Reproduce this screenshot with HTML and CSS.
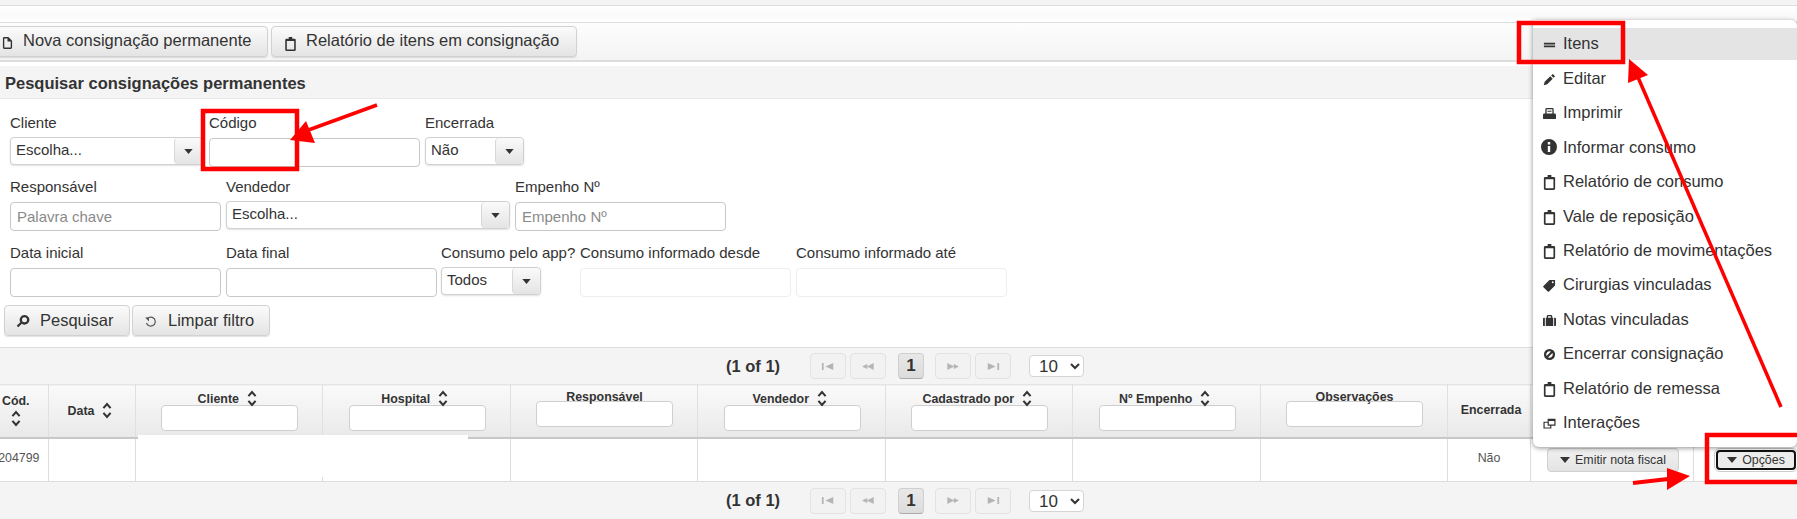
FILE: index.html
```html
<!DOCTYPE html>
<html lang="pt">
<head>
<meta charset="utf-8">
<title>Consignações permanentes</title>
<link rel="stylesheet" href="styles.css">
</head>
<body>
<svg class="sprites" width="0" height="0" aria-hidden="true">
  <symbol id="i-caret" viewBox="0 0 10 6"><path d="M0 0h10L5 6z" fill="currentColor"/></symbol>
  <symbol id="i-sort" viewBox="0 0 10 18"><path d="M1.200 6.500 5 2.200l3.800 4.300M1.200 11.500 5 15.800l3.800-4.300" fill="none" stroke="currentColor" stroke-width="2.200"/></symbol>
  <symbol id="i-clip" viewBox="0 0 12 16"><path fill-rule="evenodd" fill="currentColor" d="M4 0h4v2h2.500A1.500 1.500 0 0 1 12 3.500V14.500A1.500 1.500 0 0 1 10.500 16h-9A1.500 1.500 0 0 1 0 14.500V3.500A1.500 1.500 0 0 1 1.500 2H4zM1.800 4.500v9.700h8.400V4.500z"/></symbol>
  <symbol id="i-file" viewBox="0 0 12 14"><path fill-rule="evenodd" fill="currentColor" d="M2 1h5l4 4v7.500a1.500 1.500 0 0 1-1.500 1.500h-7A1.500 1.500 0 0 1 1 12.500V2.500A1.500 1.500 0 0 1 2 1zM2.500 2.500v10h7V6H6V2.500z"/></symbol>
  <symbol id="i-search" viewBox="0 0 14 14"><path fill-rule="evenodd" fill="currentColor" d="M8.500 1a4.800 4.800 0 1 1-2.700 8.700L2.300 13.300.7 11.700l3.600-3.500A4.800 4.800 0 0 1 8.500 1zm0 2.300a2.500 2.500 0 1 0 0 5 2.500 2.500 0 0 0 0-5z"/></symbol>
  <symbol id="i-refresh" viewBox="0 0 14 14"><path d="M3.500 3.500A4.500 4.500 0 1 1 2.500 8" fill="none" stroke="currentColor" stroke-width="1.200"/><path d="M1 2.500h4v4z" fill="currentColor"/></symbol>
  <symbol id="i-lines" viewBox="0 0 14 14"><path d="M1 5h12v2H1zM1 8h12v2H1z" fill="currentColor"/></symbol>
  <symbol id="i-pencil" viewBox="0 0 14 14"><path d="M.8 13.200l1-3.700 6-6 2.700 2.700-6 6zM8.800 2.700 10.500 1l2.500 2.500-1.700 1.700z" fill="currentColor"/></symbol>
  <symbol id="i-print" viewBox="0 0 14 14"><path fill-rule="evenodd" fill="currentColor" d="M4 1h6a1.500 1.500 0 0 1 1.500 1.500V7h1A1.500 1.500 0 0 1 14 8.500V12a1 1 0 0 1-1 1H1a1 1 0 0 1-1-1V8.500A1.500 1.500 0 0 1 1.500 7h1V2.500A1.500 1.500 0 0 1 4 1zM3.900 2.500V7h6.200V2.500zM4.800 4h4.400v1H4.800z"/></symbol>
  <symbol id="i-info" viewBox="0 0 16 16"><path fill-rule="evenodd" fill="currentColor" d="M8 0a8 8 0 1 1 0 16A8 8 0 0 1 8 0zM6.800 3v2.400h2.400V3zM6.800 7v6h2.400V7z"/></symbol>
  <symbol id="i-tag" viewBox="0 0 14 14"><path fill-rule="evenodd" fill="currentColor" d="M7 1h6v6l-6.500 6.500a1 1 0 0 1-1.400 0L.5 8.900a1 1 0 0 1 0-1.400zm3.500 1.500a1 1 0 1 0 0 2 1 1 0 0 0 0-2z"/></symbol>
  <symbol id="i-case" viewBox="0 0 14 14"><path fill-rule="evenodd" fill="currentColor" d="M4 4V2.500A1.500 1.500 0 0 1 5.500 1h3A1.500 1.500 0 0 1 10 2.500V4h1v9H3V4zm1.500 0h3V2.500h-3zM0 5a1 1 0 0 1 1-1h1v9H1a1 1 0 0 1-1-1zM12 4h1a1 1 0 0 1 1 1v7a1 1 0 0 1-1 1h-1z"/></symbol>
  <symbol id="i-ban" viewBox="0 0 14 14"><path fill-rule="evenodd" fill="currentColor" d="M7 1a6 6 0 1 1 0 12A6 6 0 0 1 7 1zM3.800 8.600l4.800-4.800A3.600 3.600 0 0 0 3.800 8.600zM5.400 10.200a3.600 3.600 0 0 0 4.800-4.800z"/></symbol>
  <symbol id="i-win" viewBox="0 0 14 14"><path fill-rule="evenodd" fill="currentColor" d="M5 2h8.500v7.500H9V12.500H.5V5H5zM6.300 4.300v3.900h5.900V4.300zM1.800 6.300v4.900H7.700V9.500H5V6.300z"/></symbol>
  <symbol id="p-first" viewBox="0 0 16 10"><path d="M1 1h2v8H1zM14 1v8L5 5z" fill="currentColor"/></symbol>
  <symbol id="p-prev" viewBox="0 0 18 10"><path d="M8 2 2 5l6 3M16 1v8L8 5z" fill="currentColor" stroke="currentColor" stroke-width=".6"/></symbol>
  <symbol id="p-next" viewBox="0 0 18 10"><path d="M2 1v8l8-4zM10 2l6 3-6 3" fill="currentColor" stroke="currentColor" stroke-width=".6"/></symbol>
  <symbol id="p-last" viewBox="0 0 16 10"><path d="M2 1v8l9-4zM13 1h2v8h-2z" fill="currentColor"/></symbol>
</svg>

<div class="page">
  <div class="top-strip"></div>
  <div class="top-gap"></div>

  <div class="toolbar">
    <button class="btn btn-tool btn-first"><svg class="ico ico-file"><use href="#i-file"/></svg>Nova consignação permanente</button>
    <button class="btn btn-tool"><svg class="ico ico-clip"><use href="#i-clip"/></svg>Relatório de itens em consignação</button>
  </div>

  <section class="search">
    <h2 class="search-title">Pesquisar consignações permanentes</h2>
    <div class="form">
      <div class="row row-1">
        <label class="field w-cliente"><span class="lbl">Cliente</span>
          <span class="select"><span class="select-val">Escolha...</span><span class="select-btn"><svg class="caret"><use href="#i-caret"/></svg></span></span></label>
        <label class="field w-std"><span class="lbl">Código</span><input class="input" type="text"></label>
        <label class="field w-enc"><span class="lbl">Encerrada</span>
          <span class="select"><span class="select-val">Não</span><span class="select-btn"><svg class="caret"><use href="#i-caret"/></svg></span></span></label>
      </div>
      <div class="row row-2">
        <label class="field w-std"><span class="lbl">Responsável</span><input class="input" type="text" placeholder="Palavra chave"></label>
        <label class="field w-vend"><span class="lbl">Vendedor</span>
          <span class="select"><span class="select-val">Escolha...</span><span class="select-btn"><svg class="caret"><use href="#i-caret"/></svg></span></span></label>
        <label class="field w-std"><span class="lbl">Empenho Nº</span><input class="input" type="text" placeholder="Empenho Nº"></label>
      </div>
      <div class="row row-3">
        <label class="field w-std"><span class="lbl">Data inicial</span><input class="input" type="text"></label>
        <label class="field w-std"><span class="lbl">Data final</span><input class="input" type="text"></label>
        <label class="field w-app"><span class="lbl">Consumo pelo app?</span>
          <span class="select"><span class="select-val">Todos</span><span class="select-btn"><svg class="caret"><use href="#i-caret"/></svg></span></span></label>
        <label class="field w-std"><span class="lbl">Consumo informado desde</span><input class="input input-off" type="text" disabled></label>
        <label class="field w-std"><span class="lbl">Consumo informado até</span><input class="input input-off" type="text" disabled></label>
      </div>
      <div class="actions">
        <button class="btn btn-form"><svg class="ico ico-search"><use href="#i-search"/></svg>Pesquisar</button>
        <button class="btn btn-form"><svg class="ico ico-refresh"><use href="#i-refresh"/></svg>Limpar filtro</button>
      </div>
    </div>
  </section>

  <div class="results">
    <div class="pager">
      <span class="pager-count">(1 of 1)</span>
      <span class="pg pg-a"><svg class="pg-i"><use href="#p-first"/></svg></span>
      <span class="pg pg-b"><svg class="pg-i"><use href="#p-prev"/></svg></span>
      <span class="pg-cur">1</span>
      <span class="pg pg-b"><svg class="pg-i"><use href="#p-next"/></svg></span>
      <span class="pg pg-a"><svg class="pg-i"><use href="#p-last"/></svg></span>
      <select class="pg-size"><option>10</option></select>
    </div>

    <table class="grid">
      <colgroup>
        <col class="c-cod"><col class="c-data"><col class="c-std"><col class="c-std"><col class="c-std"><col class="c-std"><col class="c-std"><col class="c-std"><col class="c-std"><col class="c-enc"><col class="c-nf"><col class="c-opt">
      </colgroup>
      <thead>
        <tr>
          <th>Cód.<svg class="sort sort-block"><use href="#i-sort"/></svg></th>
          <th>Data<svg class="sort"><use href="#i-sort"/></svg></th>
          <th><span class="th-lbl">Cliente<svg class="sort"><use href="#i-sort"/></svg></span><input class="th-input" type="text"></th>
          <th><span class="th-lbl">Hospital<svg class="sort"><use href="#i-sort"/></svg></span><input class="th-input" type="text"></th>
          <th><span class="th-lbl th-plain">Responsável</span><input class="th-input" type="text"></th>
          <th><span class="th-lbl">Vendedor<svg class="sort"><use href="#i-sort"/></svg></span><input class="th-input" type="text"></th>
          <th><span class="th-lbl">Cadastrado por<svg class="sort"><use href="#i-sort"/></svg></span><input class="th-input" type="text"></th>
          <th><span class="th-lbl">Nº Empenho<svg class="sort"><use href="#i-sort"/></svg></span><input class="th-input" type="text"></th>
          <th><span class="th-lbl th-plain">Observações</span><input class="th-input" type="text"></th>
          <th class="th-enc">Encerrada</th>
          <th></th>
          <th></th>
        </tr>
      </thead>
      <tbody>
        <tr>
          <td class="td-cod">204799</td><td></td><td></td><td></td><td></td><td></td><td></td><td></td><td></td>
          <td class="td-txt">Não</td>
          <td><button class="btn-row"><svg class="caret-sm"><use href="#i-caret"/></svg>Emitir nota fiscal</button></td>
          <td class="td-opt"><button class="btn-row btn-focus"><svg class="caret-sm"><use href="#i-caret"/></svg>Opções</button></td>
        </tr>
      </tbody>
    </table>

    <div class="pager pager-bottom">
      <span class="pager-count">(1 of 1)</span>
      <span class="pg pg-a"><svg class="pg-i"><use href="#p-first"/></svg></span>
      <span class="pg pg-b"><svg class="pg-i"><use href="#p-prev"/></svg></span>
      <span class="pg-cur">1</span>
      <span class="pg pg-b"><svg class="pg-i"><use href="#p-next"/></svg></span>
      <span class="pg pg-a"><svg class="pg-i"><use href="#p-last"/></svg></span>
      <select class="pg-size"><option>10</option></select>
    </div>
  </div>
</div>

<div class="redact"></div>

<ul class="menu">
  <li class="menu-item is-active"><svg class="m-ico"><use href="#i-lines"/></svg>Itens</li>
  <li class="menu-item"><svg class="m-ico"><use href="#i-pencil"/></svg>Editar</li>
  <li class="menu-item"><svg class="m-ico"><use href="#i-print"/></svg>Imprimir</li>
  <li class="menu-item"><svg class="m-ico m-ico-lg"><use href="#i-info"/></svg>Informar consumo</li>
  <li class="menu-item"><svg class="m-ico"><use href="#i-clip"/></svg>Relatório de consumo</li>
  <li class="menu-item"><svg class="m-ico"><use href="#i-clip"/></svg>Vale de reposição</li>
  <li class="menu-item"><svg class="m-ico"><use href="#i-clip"/></svg>Relatório de movimentações</li>
  <li class="menu-item"><svg class="m-ico"><use href="#i-tag"/></svg>Cirurgias vinculadas</li>
  <li class="menu-item"><svg class="m-ico"><use href="#i-case"/></svg>Notas vinculadas</li>
  <li class="menu-item"><svg class="m-ico"><use href="#i-ban"/></svg>Encerrar consignação</li>
  <li class="menu-item"><svg class="m-ico"><use href="#i-clip"/></svg>Relatório de remessa</li>
  <li class="menu-item"><svg class="m-ico"><use href="#i-win"/></svg>Interações</li>
</ul>

<svg class="marks" viewBox="0 0 1797 519" width="1797" height="519" aria-hidden="true">
  <g fill="none" stroke="#f00" stroke-width="4.500">
    <rect x="203" y="111" width="94" height="58"/>
    <rect x="1519" y="23" width="104" height="39"/>
    <rect x="1707" y="435" width="100" height="47"/>
  </g>
  <g stroke="#f00" fill="#f00">
    <path d="M377 105 303 132" stroke-width="3.500"/>
    <path d="M290 140 306 121 315 143z" stroke="none"/>
    <path d="M1781 407 1637 75" stroke-width="3.500"/>
    <path d="M1629 59 1628 83 1648 75z" stroke="none"/>
    <path d="M1633 483 1668 479" stroke-width="4"/>
    <path d="M1690 476 1667 468 1667 490z" stroke="none"/>
  </g>
</svg>
</body>
</html>
```
FILE: styles.css
```css
* { box-sizing: border-box; }
html, body { margin: 0; padding: 0; }
body {
  width: 1797px;
  height: 519px;
  overflow: hidden;
  position: relative;
  background: #fff;
  font-family: "Liberation Sans", Arial, sans-serif;
  font-size: 15px;
  color: #333;
}
.sprites { position: absolute; }
.page { width: 1797px; }

.top-strip { height: 6px; background: #f4f4f4; border-bottom: 1px solid #ddd; }
.top-gap { height: 16px; background: linear-gradient(#fff, #fafafa 60%, #fff); }

.toolbar {
  height: 40px;
  display: flex;
  align-items: center;
  gap: 3px;
  border-top: 1px solid #ddd;
  border-bottom: 2px solid #ddd;
  background: linear-gradient(#fdfdfd, #f4f4f4);
}

.btn {
  display: inline-flex;
  align-items: center;
  height: 31px;
  font-family: inherit;
  font-size: 16.500px;
  color: #333;
  border: 1px solid #d2d2d2;
  border-radius: 4px;
  background: linear-gradient(#fbfbfb, #e4e4e4);
  box-shadow: 0 1px 1px rgba(0,0,0,.12);
  padding: 0;
}
.btn-tool { padding-bottom: 2px; }
.btn-first { margin-left: -5px; width: 273px; padding-left: 5px; }
.btn-tool:nth-child(2) { width: 306px; }
.ico { color: #333; flex: none; }
.ico-file { width: 11px; height: 13px; margin: 4px 10px 0 1px; }
.ico-clip { width: 11px; height: 14px; margin: 6px 10px 0 13px; }
.ico-search { width: 14px; height: 14px; margin: 0 10px 0 11px; }
.ico-refresh { width: 14px; height: 14px; margin: 2px 10px 0 11px; color: #555; }

.search { margin-top: 4px; }
.search-title {
  margin: 0;
  height: 33px;
  line-height: 34px;
  padding-left: 5px;
  font-size: 16.500px;
  font-weight: 700;
  background: #f4f4f4;
  border-bottom: 1px solid #e8e8e8;
}
.form { padding-left: 10px; height: 248px; position: relative; }
.row { display: flex; gap: 5px; }
.row-1 { padding-top: 15px; height: 79px; gap: 6px; }
.row-2 { height: 66px; }
.row-3 { height: 61px; }

.field { display: flex; flex-direction: column; }
.lbl { display: block; line-height: 18px; height: 24px; font-size: 15px; white-space: nowrap; }
.w-std { width: 211px; }
.w-cliente { width: 193px; }
.w-enc { width: 99px; margin-left: -1px; }
.w-vend { width: 284px; }
.w-app { width: 134px; margin-left: -1px; }

.input {
  display: block;
  width: 100%;
  height: 29px;
  margin: 0;
  padding: 0 6px;
  border: 1px solid #c8c8c8;
  border-radius: 4px;
  background: #fff;
  font: 15px "Liberation Sans", Arial, sans-serif;
  color: #333;
}
.input::placeholder { color: #8a8a8a; opacity: 1; }
.input-off { border-color: #eee; }

.select {
  display: flex;
  height: 28px;
  margin-top: -1px;
  border: 1px solid #d0d0d0;
  border-radius: 4px;
  background: #fff;
  box-shadow: 0 1px 2px rgba(0,0,0,.12);
  overflow: hidden;
}
.select-val { flex: 1; padding-left: 5px; line-height: 24px; font-size: 15px; }
.select-btn {
  width: 28px;
  display: flex;
  align-items: center;
  justify-content: center;
  border-left: 1px solid #d8d8d8;
  border-radius: 4px;
  background: linear-gradient(#fafafa, #e4e4e4);
}
.w-app .select { width: 100px; }
.caret { width: 9px; height: 5px; color: #333; }

.actions {
  display: flex;
  gap: 2px;
  margin-left: -6px;
}
.btn-form:nth-child(1) { width: 126px; }
.btn-form:nth-child(2) { width: 138px; }

.results { background: #f4f4f4; border-top: 1px solid #ddd; }
.pager {
  height: 36px;
  display: flex;
  align-items: center;
  padding-left: 726px;
}
.pager-bottom { height: 37px; }
.pager-count { width: 84px; font-size: 16.500px; font-weight: 700; }
.pg {
  height: 26px;
  display: inline-flex;
  align-items: center;
  justify-content: center;
  border: 1px solid #e2e2e2;
  border-radius: 4px;
  background: #f2f2f2;
  color: #b4b4b4;
  width: 36px;
  margin-right: 4px;
}
.pg-i { width: 14px; height: 9px; }
.pg-cur {
  height: 26px;
  width: 26px;
  margin: 0 11px 0 8px;
  display: inline-flex;
  align-items: center;
  justify-content: center;
  font-weight: 700;
  font-size: 17px;
  border: 1px solid #cfcfcf;
  border-bottom-color: #aaa;
  border-radius: 4px;
  background: linear-gradient(#e8e8e8, #dcdcdc);
}
.pg-size {
  width: 55px;
  height: 22px;
  margin-left: 14px;
  padding: 0 0 0 5px;
  font: 17px "Liberation Sans", Arial, sans-serif;
  color: #333;
  border: 1px solid #d5d5d5;
  border-radius: 4px;
  background-color: #fff;
}

.grid {
  table-layout: fixed;
  border-collapse: collapse;
  width: 1815px;
  margin-left: -18.500px;
  background: #fff;
}
.c-cod { width: 66px; }
.c-data { width: 87px; }
.c-std { width: 187.500px; }
.c-enc { width: 83px; }
.c-nf { width: 163px; }
.c-opt { width: 104px; }
.grid th {
  height: 53px;
  padding: 0 0 0 1.500px;
  font-size: 12.400px;
  font-weight: 700;
  text-align: center;
  vertical-align: middle;
  background: linear-gradient(#fafafa, #e9e9e9);
  border-left: 1px solid #e0e0e0;
  border-right: 1px solid #e0e0e0;
  border-bottom: 2px solid #c8c8c8;
  border-top: 1px solid #e4e4e4;
}
.grid .th-enc { padding: 0 0 2px 4px; }
.grid td {
  height: 44px;
  padding: 0;
  font-size: 12.400px;
  text-align: center;
  border-left: 1px solid #ddd;
  border-right: 1px solid #ddd;
  border-bottom: 1px solid #ddd;
  color: #555;
}
.grid .td-cod { text-align: right; padding: 0 8px 3px 0; }
.grid .td-txt { padding-bottom: 3px; }
.grid .td-opt { text-align: right; }
.th-lbl { display: block; line-height: 14px; height: 15px; white-space: nowrap; }
.th-plain { height: 11px; }
.th-plain + .th-input { margin-bottom: 4px; }
.th-input {
  display: block;
  width: 137px;
  height: 26px;
  margin: 0 auto;
  border: 1px solid #cfcfcf;
  border-radius: 4px;
  background: #fff;
}
.sort { width: 10px; height: 17px; margin: 0 4.500px 0 8px; vertical-align: -4px; color: #333; }
.sort-block { display: block; margin: 2px auto 0; }

.btn-row {
  display: inline-flex;
  align-items: center;
  justify-content: center;
  width: 132px;
  height: 24px;
  padding: 0;
  margin-left: 2px;
  font: 12.400px "Liberation Sans", Arial, sans-serif;
  color: #333;
  border: 1px solid #d0d0d0;
  border-radius: 4px;
  background: linear-gradient(#f0f0f0, #e4e4e4);
}
.caret-sm { width: 10px; height: 6px; margin-right: 5px; color: #333; flex: none; }
.btn-focus {
  width: 80px;
  height: 20px;
  margin: 0 1px 0 0;
  border: 2px solid #111;
  outline: 1px solid #ccc;
  outline-offset: 1px;
  background: #ececec;
}

.redact {
  position: absolute;
  left: 138px;
  top: 435px;
  width: 330px;
  height: 42px;
  background: #fff;
}

.menu {
  position: absolute;
  left: 1533px;
  top: 20px;
  width: 264px;
  height: 427px;
  margin: 0;
  padding: 8px 0 0;
  list-style: none;
  background: #fff;
  border-radius: 0 6px 6px 6px;
  box-shadow: 0 1px 5px rgba(0,0,0,.45);
}
.menu-item {
  height: 34.400px;
  display: flex;
  align-items: center;
  font-size: 16.500px;
  padding: 0 0 2px 9px;
  white-space: nowrap;
}
.menu-item.is-active { background: #e4e4e4; height: 32px; margin-bottom: 2.400px; }
.m-ico { width: 13px; height: 15px; margin: 2px 7px 0 1px; color: #333; flex: none; }
.m-ico-lg { width: 16px; height: 16px; margin: 0 6px 0 -1px; }

.marks { position: absolute; left: 0; top: 0; pointer-events: none; }
```
